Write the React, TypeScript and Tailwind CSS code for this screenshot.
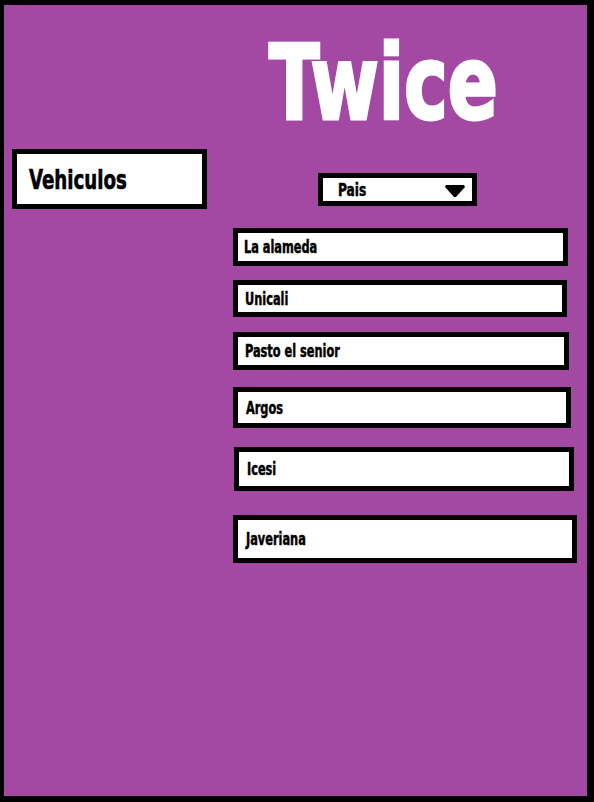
import React from "react";

const font = "font-['DejaVu_Sans_Condensed','DejaVu_Sans',sans-serif] font-bold font-stretch-condensed";

const sedes = [
  { name: "La alameda", box: "w-[335px] h-[38px] mt-[22px]", pad: "pl-[6px]" },
  { name: "Unicali", box: "w-[334px] h-[37px] mt-[14px]", pad: "pl-[7px]" },
  { name: "Pasto el senior", box: "w-[336px] h-[38px] mt-[15px]", pad: "pl-[7px]" },
  { name: "Argos", box: "w-[338px] h-[41px] mt-[17px]", pad: "pl-[8px]" },
  { name: "Icesi", box: "w-[340px] h-[44px] mt-[19px] ml-[1px]", pad: "pl-[8px]" },
  { name: "Javeriana", box: "w-[344px] h-[48px] mt-[24px]", pad: "pl-[8px]" },
];

const App = () => {
  return (
    <div className="w-[594px] h-[802px] bg-[#a349a4] border-black border-t-[5px] border-l-[4px] border-r-[7px] border-b-[6px] flex flex-col">
      {/* titulo */}
      <h1 className={`${font} text-white text-[104px] leading-none pl-[265px] pt-[26px]`}>
        <span className="inline-block origin-left scale-x-[0.79] [-webkit-text-stroke:3px_white]">Twice</span>
      </h1>

      <div className="flex items-start mt-[14px]">
        {/* menu lateral */}
        <div className="ml-[8px] w-[195px] h-[60px] bg-white border-[5px] border-black flex items-center pl-[12px]">
          <span className={`${font} text-black text-[27px] leading-none inline-block origin-left scale-x-[0.75] [-webkit-text-stroke:0.6px_black]`}>Vehiculos</span>
        </div>

        <div className="ml-[26px] pt-[24px] flex flex-col">
          {/* selector pais */}
          <div className="ml-[85px] w-[159px] h-[33px] bg-white border-[5px] border-black flex items-center justify-between pl-[15px] pr-[7px]">
            <span className={`${font} text-black text-[18px] leading-none inline-block origin-left scale-x-[0.75] [-webkit-text-stroke:0.5px_black]`}>Pais</span>
            <svg width="20" height="13" viewBox="0 0 20 13" className="mt-[4px]">
              <polygon points="1,0 19,0 20,2 11,12 9,12 0,2" fill="black" />
            </svg>
          </div>

          {sedes.map((s) => (
            <div key={s.name} className={`${s.box} ${s.pad} bg-white border-[5px] border-black flex items-center`}>
              <span className={`${font} text-black text-[18px] leading-none inline-block origin-left scale-x-[0.7] [-webkit-text-stroke:0.5px_black]`}>{s.name}</span>
            </div>
          ))}
        </div>
      </div>
    </div>
  );
};

export default App;
